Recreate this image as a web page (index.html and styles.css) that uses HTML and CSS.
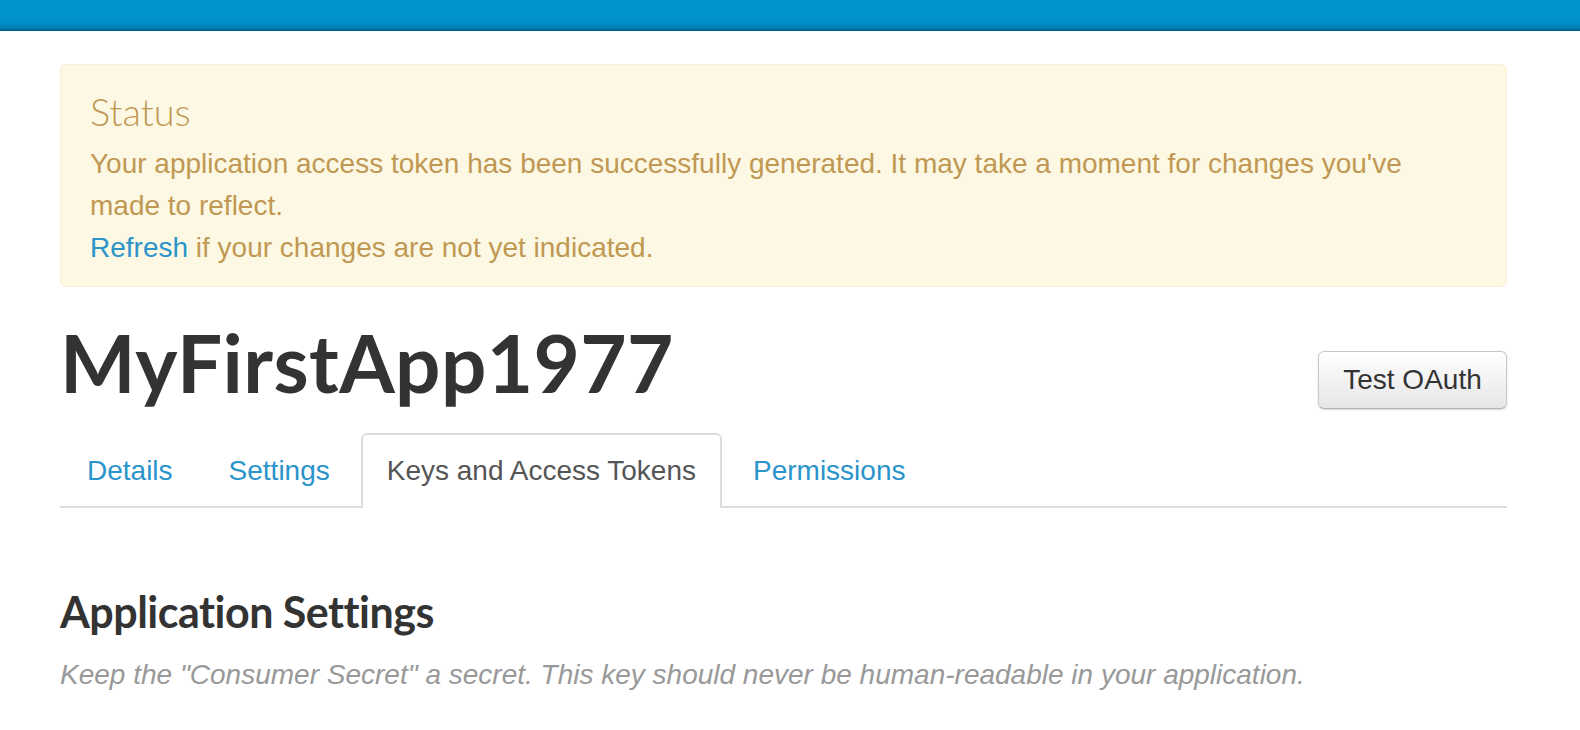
FILE: index.html
```html
<!DOCTYPE html>
<html>
<head>
<meta charset="utf-8">
<link rel="stylesheet" href="styles.css">
</head>
<body>
<div class="topbar"></div>
<div class="container">
  <div class="alert">
    <h4 class="alert-title">Status</h4>
    <p class="alert-text">Your application access token has been successfully generated. It may take a moment for changes you've made to reflect.</p>
    <p class="alert-text"><a class="link" href="#">Refresh</a> if your changes are not yet indicated.</p>
  </div>
  <div class="app-header">
    <h1 class="app-title">MyFirstApp1977</h1>
    <button class="btn">Test OAuth</button>
  </div>
  <ul class="tabs">
    <li class="tab"><a href="#">Details</a></li>
    <li class="tab"><a href="#">Settings</a></li>
    <li class="tab active"><a href="#">Keys and Access Tokens</a></li>
    <li class="tab"><a href="#">Permissions</a></li>
  </ul>
  <h2 class="section-title">Application Settings</h2>
  <p class="note">Keep the "Consumer Secret" a secret. This key should never be human-readable in your application.</p>
</div>
</body>
</html>
```
FILE: styles.css
```css
html, body {
  margin: 0;
  padding: 0;
  background: #fff;
}
body {
  font-family: "Liberation Sans", Arial, sans-serif;
  color: #333;
}
.topbar {
  height: 29px;
  background: linear-gradient(#0094ce 0%, #0092cc 75%, #007aac 100%);
  border-bottom: 2px solid #00668f;
}
.container {
  width: 1447px;
  margin-left: 60px;
  padding-top: 33px;
}
.alert {
  background: #fcf8e3;
  border: 1px solid #fbeed5;
  border-radius: 6px;
  padding: 26px 29px 17px;
  color: #c09853;
}
.alert-title {
  margin: 0 0 12px;
  font-family: Lato, sans-serif;
  font-weight: 300;
  font-size: 38px;
  line-height: 40px;
}
.alert-text {
  margin: 0;
  font-size: 28px;
  line-height: 42px;
}
.link {
  color: #2a94cb;
  text-decoration: none;
}
.app-header {
  display: flex;
  justify-content: space-between;
  align-items: flex-start;
  margin-top: 30px;
}
.app-title {
  margin: 0;
  font-family: Lato, sans-serif;
  font-weight: 700;
  font-size: 80px;
  line-height: 90px;
  letter-spacing: 0.4px;
  color: #333;
}
.btn {
  font-family: "Liberation Sans", Arial, sans-serif;
  font-size: 28px;
  color: #333;
  height: 58px;
  width: 189px;
  padding: 0;
  margin-top: 34px;
  background: linear-gradient(#ffffff, #e6e6e6);
  border: 1px solid #c8c8c8;
  border-bottom-color: #b3b3b3;
  border-radius: 6px;
  box-shadow: 0 1px 2px rgba(0,0,0,0.15);
}
.tabs {
  list-style: none;
  margin: 24px 0 0;
  padding: 0 0 0 2px;
  display: flex;
  border-bottom: 2px solid #ddd;
}
.tab {
  margin-right: 6px;
  margin-bottom: -2px;
}
.tab a {
  display: block;
  box-sizing: border-box;
  padding: 0 23px;
  height: 73px;
  line-height: 71px;
  font-size: 28px;
  color: #2a94cb;
  text-decoration: none;
  border: 2px solid transparent;
  border-bottom: none;
  border-radius: 6px 6px 0 0;
}
.tab.active a {
  color: #555;
  background: #fff;
  border-color: #ddd;
  height: 75px;
  padding: 0 24px;
}
.section-title {
  margin: 78px 0 0;
  font-family: Lato, sans-serif;
  font-weight: 700;
  font-size: 43px;
  line-height: 52px;
  letter-spacing: -0.5px;
  color: #333;
}
.note {
  margin: 17px 0 0;
  font-size: 28px;
  line-height: 40px;
  font-style: italic;
  color: #999;
}
```
